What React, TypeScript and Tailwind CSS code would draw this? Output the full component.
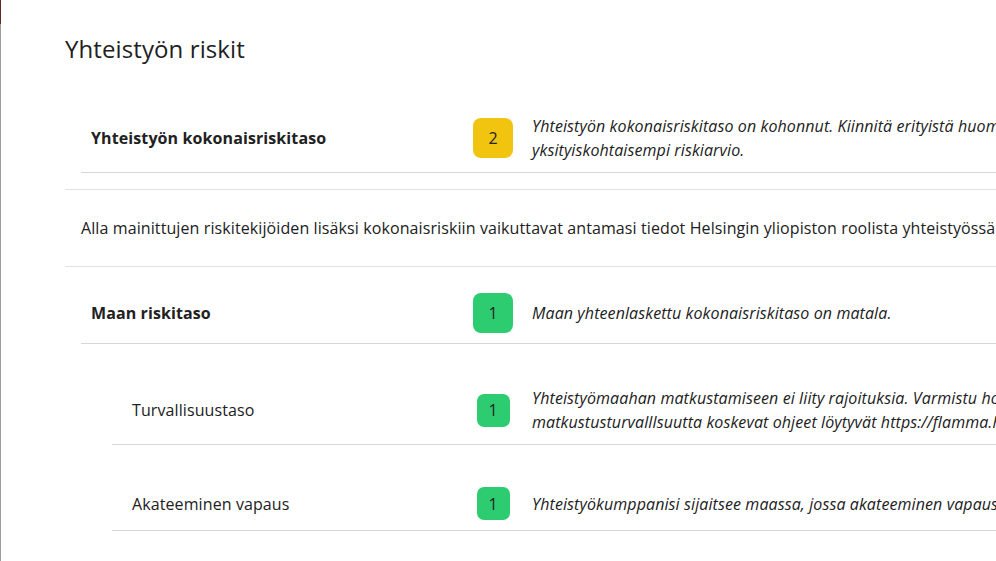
import React from "react";

function Badge({ value, color, small }: { value: number; color: string; small?: boolean }) {
  return (
    <div className="flex w-10 shrink-0 justify-center">
      <div
        className={
          (small ? "h-[33px] w-[33px] rounded-[7px] " : "h-10 w-10 rounded-lg ") +
          "flex items-center justify-center text-[16px] text-[#222]"
        }
        style={{ backgroundColor: color }}
      >
        {value}
      </div>
    </div>
  );
}

function Row({
  label,
  value,
  color,
  lines,
  sub,
}: {
  label: string;
  value: number;
  color: string;
  lines: string[];
  sub?: boolean;
}) {
  return (
    <div
      className={
        sub
          ? "ml-[31px] mt-8 flex items-center border-b border-[#d6d6d6] px-5 py-2.5"
          : "flex items-center border-b border-[#d6d6d6] px-2.5 py-2.5"
      }
    >
      <div className={(sub ? "w-[341px] font-normal" : "w-[382px] font-bold") + " shrink-0 text-[16px] leading-6"}>
        {label}
      </div>
      <Badge value={value} color={color} small={sub} />
      <div className="pl-[19px] text-[16px] italic leading-6">
        {lines.map((l, i) => (
          <div key={i} className="whitespace-nowrap">
            {l}
          </div>
        ))}
      </div>
    </div>
  );
}

export default function App() {
  const yellow = "#f1c40f";
  const green = "#2ecc71";
  return (
    <div
      className="flex h-[561px] w-[996px] overflow-hidden bg-white tracking-[0.1px] text-[#212121]"
      style={{ fontFamily: '"Open Sans", "Noto Sans", sans-serif' }}
    >
      <div className="flex w-px shrink-0 flex-col">
        <div className="h-6 bg-[#5c2a22]" />
        <div className="flex-1 bg-[#9c9c9c]" />
      </div>
      <div className="w-[1400px] shrink-0 pl-16 pt-[33px]">
        <h1 className="text-[24px] font-normal leading-8">Yhteistyön riskit</h1>

        <div className="mt-[23px] border-b border-[#e3e3e3] px-4 pt-4 pb-4">
          <Row
            label="Yhteistyön kokonaisriskitaso"
            value={2}
            color={yellow}
            lines={[
              "Yhteistyön kokonaisriskitaso on kohonnut. Kiinnitä erityistä huomiota riskiä nostaviin tekijöihin ja tee tarvittaessa",
              "yksityiskohtaisempi riskiarvio.",
            ]}
          />
        </div>

        <div className="border-b border-[#e3e3e3] px-4 py-[26px]">
          <p className="whitespace-nowrap text-[16px] leading-6">
            Alla mainittujen riskitekijöiden lisäksi kokonaisriskiin vaikuttavat antamasi tiedot Helsingin yliopiston roolista yhteistyössä sekä yhteistyön luonteesta.
          </p>
        </div>

        <div className="px-4 pt-4">
          <Row
            label="Maan riskitaso"
            value={1}
            color={green}
            lines={["Maan yhteenlaskettu kokonaisriskitaso on matala."]}
          />
          <Row
            sub
            label="Turvallisuustaso"
            value={1}
            color={green}
            lines={[
              "Yhteistyömaahan matkustamiseen ei liity rajoituksia. Varmistu hotellin ja kohteen turvallisuudesta ennen matkaa. Yliopiston",
              "matkustusturvalllsuutta koskevat ohjeet löytyvät https://flamma.helsinki.fi/matkustaminen",
            ]}
          />
          <Row
            sub
            label="Akateeminen vapaus"
            value={1}
            color={green}
            lines={["Yhteistyökumppanisi sijaitsee maassa, jossa akateeminen vapaus on turvattu."]}
          />
        </div>
      </div>
    </div>
  );
}
